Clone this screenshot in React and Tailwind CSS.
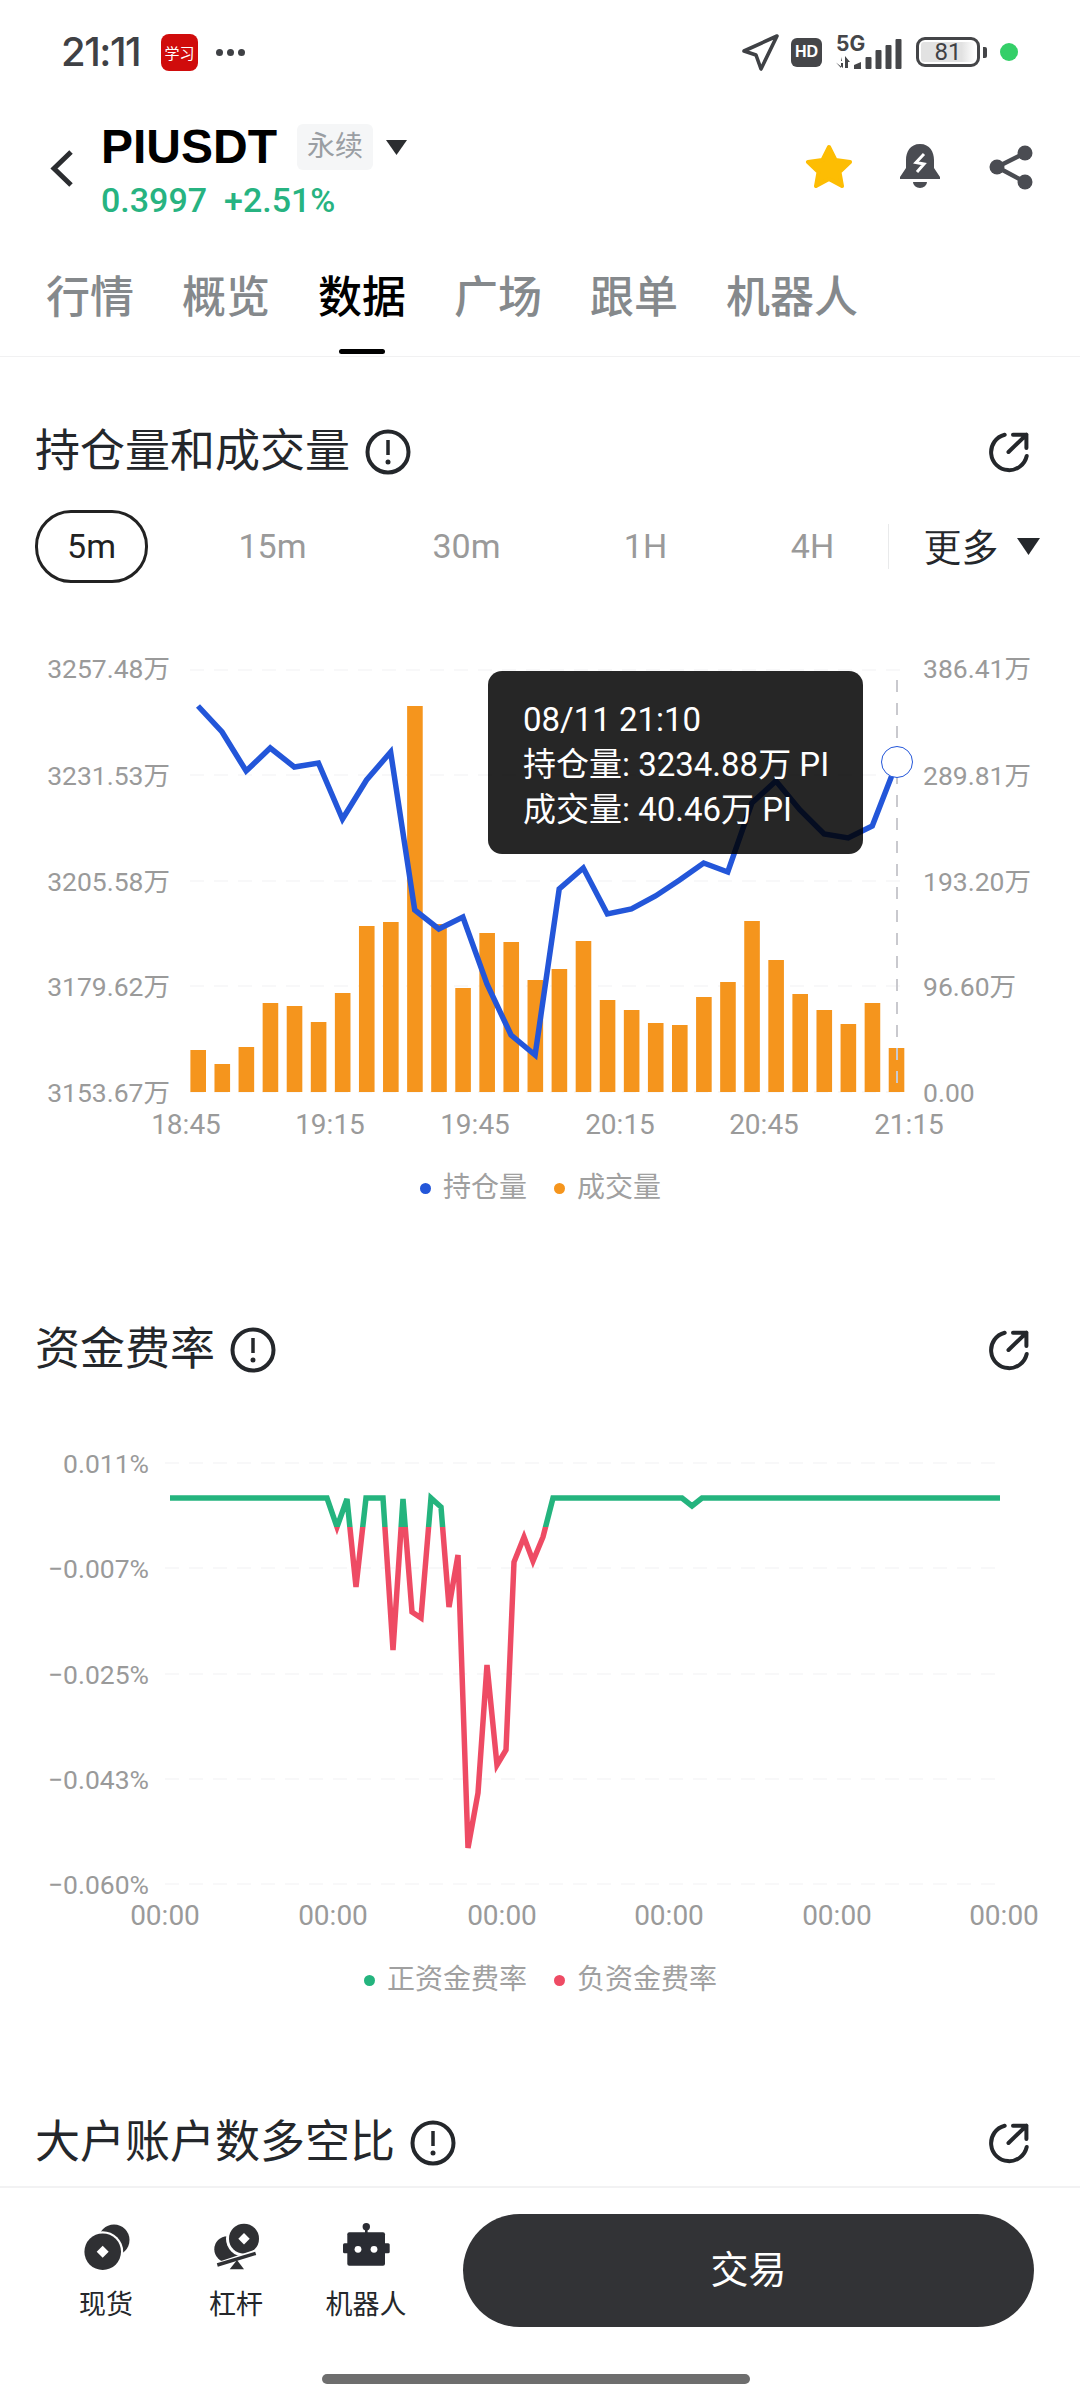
// App.jsx
const barTops = [1050, 1064, 1047, 1003, 1006, 1022, 993, 926, 922, 706, 924, 988, 933, 942, 980, 969, 941, 1000, 1010, 1023, 1025, 997, 982, 921, 960, 994, 1010, 1024, 1003, 1048];
const lineYs = [706, 732, 771, 748, 767, 763, 819, 780, 752, 910, 929, 917, 984, 1035, 1055, 889, 868, 914, 909, 896, 880, 863, 872, 803, 781, 810, 834, 838, 826, 764];
const fundingLine = "170,1498 327,1498 337,1527 347,1499 356,1587 366,1498 383,1498 393,1650 403,1499 412,1612 421,1618 431,1498 441,1507 449,1607 458,1555 468,1848 478,1793 487,1665 497,1765 506,1750 514,1562 524,1537 533,1561 543,1537 553,1498 682,1498 692,1506 702,1498 1000,1498";

const oiLeft = [["3257.48万", 668], ["3231.53万", 775], ["3205.58万", 881], ["3179.62万", 986], ["3153.67万", 1092]];
const oiRight = [["386.41万", 668], ["289.81万", 775], ["193.20万", 881], ["96.60万", 986], ["0.00", 1092]];
const oiTimes = [["18:45", 186], ["19:15", 330], ["19:45", 475], ["20:15", 620], ["20:45", 764], ["21:15", 909]];
const fundingLeft = [["0.011%", 1463], ["−0.007%", 1568], ["−0.025%", 1674], ["−0.043%", 1779], ["−0.060%", 1884]];
const fundingTimes = [165, 333, 502, 669, 837, 1004];

const tabs = ["行情", "概览", "数据", "广场", "跟单", "机器人"];

function StatusBar() {
  return (
    <div className="h-[104px] shrink-0 flex items-center pl-[61px] pr-[62px] text-[#3f4145]">
      <span className="font-['Inter',sans-serif] text-[40px] font-medium tracking-[-1.500px] leading-none">21:11</span>
      <div className="ml-[21px] w-[37px] h-[37px] rounded-[8px] bg-[#d00c0c] flex items-center justify-center text-white text-[15px] leading-none font-['Noto_Sans_CJK_SC',serif]">学习</div>
      <div className="ml-[18px] flex gap-[4px]">
        <span className="w-[7px] h-[7px] rounded-full bg-[#3f4145]" />
        <span className="w-[7px] h-[7px] rounded-full bg-[#3f4145]" />
        <span className="w-[7px] h-[7px] rounded-full bg-[#3f4145]" />
      </div>
      <div className="ml-auto flex items-center">
        <svg width="37" height="37" viewBox="0 0 37 37" fill="none" stroke="#3f4145" strokeWidth="3.6" strokeLinejoin="round">
          <path d="M2 17 35 2 19 35 14 21Z" />
        </svg>
        <div className="ml-[12px] w-[31px] h-[29px] rounded-[6px] bg-[#454649] flex items-center justify-center text-white text-[16px] font-bold leading-none font-['Liberation_Sans',sans-serif]">HD</div>
        <svg className="ml-[13px] mt-[-5px]" width="67" height="40" viewBox="0 -5 67 40" fill="#454649">
          <text x="1" y="16" fontSize="21" fontWeight="700" fontFamily="Inter, sans-serif">5G</text>
          <path d="M6 22v4h-2l3 0M1 27.500l5 5.500v-5h2v5zM10 33v-12l5 6h-2v6z" />
          <path d="M19 34v-4l7-3v7z" />
          <rect x="30.500" y="22" width="6" height="12" rx="1" />
          <rect x="40.500" y="15" width="6" height="19" rx="1" />
          <rect x="50.500" y="10" width="6" height="24" rx="1" />
          <rect x="60.500" y="4" width="6" height="30" rx="1" />
        </svg>
        <div className="ml-[14px] w-[64px] h-[30px] rounded-[9px] border-[3px] border-[#444548] p-[2px]">
          <div className="h-full rounded-[3px] bg-gradient-to-r from-[#e2e2e2] from-75% to-transparent flex items-center justify-center text-[24px] leading-none text-[#3f4145] font-['Roboto',sans-serif]">81</div>
        </div>
        <div className="ml-[3px] w-[4px] h-[11px] rounded-r-[2px] bg-[#444548]" />
        <div className="ml-[13px] w-[18px] h-[18px] rounded-full bg-[#34cf68]" />
      </div>
    </div>
  );
}

function Header() {
  return (
    <div className="h-[136px] shrink-0 flex items-start pl-[50px] pr-[47px]">
      <svg className="mt-[46px]" width="24" height="37" viewBox="0 0 24 37" fill="none" stroke="#2b2d30" strokeWidth="5">
        <path d="M21 2 4 18.500 21 35" />
      </svg>
      <div className="ml-[27px] pt-[20px]">
        <div className="flex items-center h-[46px]">
          <span className="font-['Liberation_Sans',sans-serif] text-[48px] font-bold leading-none text-black">PIUSDT</span>
          <span className="ml-[20px] w-[76px] h-[46px] rounded-[6px] bg-[#f5f6f7] flex items-center justify-center text-[28px] text-[#9a9ea3] leading-none">永续</span>
          <svg className="ml-[13px]" width="21" height="15" viewBox="0 0 21 15" fill="#2b2d30"><path d="M0 0H21L10.500 15Z" /></svg>
        </div>
        <div className="mt-[12px] flex text-[34px] leading-[36px] text-[#27b381] font-['Roboto',sans-serif] font-medium">
          <span>0.3997</span>
          <span className="ml-[17px]">+2.51%</span>
        </div>
      </div>
      <div className="ml-auto mt-[40px] flex items-start">
        <svg width="48" height="44" viewBox="0 0 48 44" fill="#fdbd03" stroke="#fdbd03" strokeWidth="4" strokeLinejoin="round">
          <path d="M24 3 30.500 16 45 18 34.500 28 37 42 24 35 11 42 13.500 28 3 18 17.500 16Z" />
        </svg>
        <svg className="ml-[47px]" width="40" height="44" viewBox="0 0 40 44" fill="#4a4c52">
          <path d="M20 0C10 0 6 8 6 16V24L0 33V35H40V33L34 24V16C34 8 30 0 20 0Z" />
          <path d="M13 38H27A7 6 0 0 1 13 38Z" />
          <path d="M24 10 16 18.500 24 20 17 28" fill="none" stroke="#fff" strokeWidth="3" />
        </svg>
        <svg className="ml-[49px]" width="44" height="46" viewBox="0 0 44 46" fill="#4a4c52">
          <path d="M36 9 8 23 36 38" fill="none" stroke="#4a4c52" strokeWidth="4.500" />
          <circle cx="8" cy="23" r="7.500" />
          <circle cx="36" cy="9" r="7.500" />
          <circle cx="36" cy="38" r="7.500" />
        </svg>
      </div>
    </div>
  );
}

function Tabs() {
  return (
    <div className="h-[117px] shrink-0 flex gap-[48px] pl-[46px] border-b border-[#f1f1f2]">
      {tabs.map((t) => (
        <div key={t} className="flex flex-col items-center pt-[36px]">
          <span className={t === "数据" ? "text-[44px] leading-[44px] font-medium text-black" : "text-[44px] leading-[44px] font-medium text-[#85898c]"}>{t}</span>
          {t === "数据" && <span className="mt-[29px] w-[46px] h-[5px] rounded-full bg-black" />}
        </div>
      ))}
    </div>
  );
}

function InfoIcon() {
  return (
    <svg width="46" height="46" viewBox="0 0 46 46" fill="none" stroke="#24272b" strokeWidth="4">
      <circle cx="23" cy="23" r="20.500" />
      <path d="M23 11V26" strokeWidth="3.500" />
      <circle cx="23" cy="33" r="2.500" fill="#24272b" stroke="none" />
    </svg>
  );
}

function ExternalIcon() {
  return (
    <svg width="44" height="44" viewBox="0 0 44 44" fill="none" stroke="#24272b" strokeWidth="4" strokeLinecap="round" strokeLinejoin="round">
      <path d="M17.700 4.700A18 18 0 1 0 39.700 26" />
      <path d="M21.500 22 39.400 4.700M26 4.700H39.400V18" />
    </svg>
  );
}

function SectionTitle({ title, className }) {
  return (
    <div className={"flex items-center pl-[35px] pr-[49px] h-[44px] " + className}>
      <span className="text-[45px] leading-[44px] text-[#24272b]">{title}</span>
      <span className="ml-[15px]"><InfoIcon /></span>
      <span className="ml-auto"><ExternalIcon /></span>
    </div>
  );
}

function Intervals() {
  return (
    <div className="mt-[36px] h-[73px] flex items-center pl-[35px] text-[34px] text-[#9a9a9a] font-['Roboto',sans-serif]">
      <div className="w-[113px] h-[73px] rounded-[36px] border-[3px] border-[#222] flex items-center justify-center text-[#222]">5m</div>
      <div className="ml-[68px] w-[113px] text-center">15m</div>
      <div className="ml-[81px] w-[113px] text-center">30m</div>
      <div className="ml-[66px] w-[113px] text-center">1H</div>
      <div className="ml-[54px] w-[113px] text-center">4H</div>
      <div className="ml-[19px] w-px h-[45px] bg-[#e9eaeb]" />
      <div className="ml-[35px] text-[38px] text-[#24272b] leading-none">更多</div>
      <svg className="ml-[17px]" width="23" height="17" viewBox="0 0 23 17" fill="#24272b"><path d="M0 0H23L11.500 17Z" /></svg>
    </div>
  );
}

function AxisText({ x, y, anchor = "start", size = 26.5, children }) {
  return (
    <text x={x} y={y} textAnchor={anchor} dominantBaseline="central" fontSize={size} fill="#9a9a9a" fontFamily="Roboto, 'Noto Sans CJK SC', sans-serif">
      {children}
    </text>
  );
}

function OiChart() {
  const line = lineYs.map((y, i) => `${198 + 24.08 * i},${y}`).join(" ");
  return (
    <div className="relative mt-[57px] h-[510px]">
      <svg className="block" width="1080" height="510" viewBox="0 640 1080 510">
        {[670, 775, 881, 986, 1092].map((y) => (
          <path key={y} d={`M190 ${y}H905`} stroke="#f6f6f7" strokeWidth="1.500" strokeDasharray="14 10" />
        ))}
        {barTops.map((y, i) => (
          <rect key={i} x={190.4 + 24.08 * i} y={y} width="15.600" height={1092 - y} fill="#f5951d" />
        ))}
        <path d="M897 680V1092" stroke="#c9c9ce" strokeWidth="2" strokeDasharray="12 11" />
        <polyline points={line} fill="none" stroke="#2356d9" strokeWidth="5.500" />
        <circle cx="897" cy="762" r="15.500" fill="#fff" stroke="#2356d9" strokeWidth="1" />
        {oiLeft.map(([t, y]) => <AxisText key={t} x="170" y={y} anchor="end">{t}</AxisText>)}
        {oiRight.map(([t, y]) => <AxisText key={t} x="923" y={y}>{t}</AxisText>)}
        {oiTimes.map(([t, x]) => <AxisText key={t} x={x} y="1124" anchor="middle" size={28}>{t}</AxisText>)}
      </svg>
      <div className="absolute left-[488px] top-[31px] w-[375px] h-[183px] rounded-[14px] bg-black/85 pl-[35px] pt-[26px] text-white text-[33px] leading-[45px] font-['Roboto','Noto_Sans_CJK_SC',sans-serif]">
        <div>08/11 21:10</div>
        <div>持仓量: 3234.88万 PI</div>
        <div>成交量: 40.46万 PI</div>
      </div>
    </div>
  );
}

function FundingChart() {
  return (
    <svg className="block mt-[58px]" width="1080" height="510" viewBox="0 1430 1080 510">
      <defs>
        <linearGradient id="fundingStroke" gradientUnits="userSpaceOnUse" x1="0" y1="1430" x2="0" y2="1940">
          <stop offset="0.19" stopColor="#24b47e" />
          <stop offset="0.19" stopColor="#ee4b64" />
        </linearGradient>
      </defs>
      {fundingLeft.map(([, y]) => (
        <path key={y} d={`M165 ${y}H1005`} stroke="#f6f6f7" strokeWidth="1.500" strokeDasharray="14 10" />
      ))}
      <polyline points={fundingLine} fill="none" stroke="url(#fundingStroke)" strokeWidth="5.500" />
      {fundingLeft.map(([t, y]) => <AxisText key={t} x="149" y={y} anchor="end">{t}</AxisText>)}
      {fundingTimes.map((x) => <AxisText key={x} x={x} y="1915" anchor="middle" size={28}>00:00</AxisText>)}
    </svg>
  );
}

function Legend({ items, className }) {
  return (
    <div className={"flex h-[36px] items-center text-[28px] leading-none text-[#a0a0a0] " + className}>
      {items.map(([label, dot], i) => (
        <div key={label} className={i === 0 ? "flex items-center" : "flex items-center ml-[27px]"}>
          <span className={"w-[11px] h-[11px] rounded-full mr-[12px] " + dot} />
          <span>{label}</span>
        </div>
      ))}
    </div>
  );
}

function BottomBar() {
  return (
    <div className="h-[214px] shrink-0 border-t-2 border-[#f2f2f3] bg-white">
      <div className="flex items-start pl-[41px]">
        <div className="w-[130px] pt-[34px] flex flex-col items-center">
          <svg width="56" height="50" viewBox="18 12 56 50">
            <circle cx="54" cy="30" r="15.500" fill="#2f3033" />
            <circle cx="42.700" cy="41.700" r="20.500" fill="#fff" />
            <circle cx="42.700" cy="41.700" r="18.300" fill="#2f3033" />
            <path d="M42.700 35.700 48.700 41.700 42.700 47.700 36.700 41.700Z" fill="#fff" />
          </svg>
          <span className="mt-[18px] text-[27px] leading-[30px] text-[#24272b]">现货</span>
        </div>
        <div className="w-[130px] pt-[34px] flex flex-col items-center">
          <svg width="56" height="50" viewBox="149 12 56 50">
            <circle cx="168.300" cy="39.300" r="13" fill="#2f3033" />
            <circle cx="185" cy="28.700" r="18" fill="#fff" />
            <circle cx="185" cy="28.700" r="15" fill="#2f3033" />
            <path d="M185 23 190.700 28.700 185 34.400 179.300 28.700Z" fill="#fff" />
            <path d="M155 57 197 43" stroke="#fff" strokeWidth="7" />
            <path d="M158.300 55 196.700 43.300" stroke="#2f3033" strokeWidth="3.500" />
            <path d="M178 50 185 59.300H170.700Z" fill="#2f3033" />
          </svg>
          <span className="mt-[18px] text-[27px] leading-[30px] text-[#24272b]">杠杆</span>
        </div>
        <div className="w-[130px] pt-[34px] flex flex-col items-center">
          <svg width="56" height="50" viewBox="279 12 56 50" fill="#2a2c33">
            <circle cx="307.300" cy="16.700" r="3.700" />
            <rect x="306" y="17" width="2.600" height="7" />
            <rect x="288.300" y="22.300" width="37.700" height="33.400" rx="2" />
            <rect x="284" y="33.300" width="46.700" height="10" rx="1.500" />
            <circle cx="299" cy="39.300" r="3.400" fill="#fff" />
            <circle cx="315" cy="39.300" r="3.400" fill="#fff" />
          </svg>
          <span className="mt-[18px] text-[27px] leading-[30px] text-[#24272b]">机器人</span>
        </div>
        <div className="ml-[32px] mt-[26px] w-[571px] h-[113px] rounded-full bg-[#323336] flex items-center justify-center text-[38px] text-white">交易</div>
      </div>
      <div className="mt-[47px] ml-[322px] w-[428px] h-[10px] rounded-full bg-[#6e6e6e]" />
    </div>
  );
}

export default function App() {
  return (
    <div className="w-[1080px] h-[2400px] flex flex-col overflow-hidden bg-white font-['Roboto','Noto_Sans_CJK_SC',sans-serif]">
      <StatusBar />
      <Header />
      <Tabs />
      <div className="flex-1 min-h-0 overflow-hidden pt-[73px]">
        <SectionTitle title="持仓量和成交量" />
        <Intervals />
        <OiChart />
        <Legend className="mt-[20px] pl-[420px]" items={[["持仓量", "bg-[#2356d9]"], ["成交量", "bg-[#f5951d]"]]} />
        <SectionTitle title="资金费率" className="mt-[122px]" />
        <FundingChart />
        <Legend className="mt-[22px] pl-[364px]" items={[["正资金费率", "bg-[#24b47e]"], ["负资金费率", "bg-[#ee4b64]"]]} />
        <SectionTitle title="大户账户数多空比" className="mt-[123px]" />
      </div>
      <BottomBar />
    </div>
  );
}
